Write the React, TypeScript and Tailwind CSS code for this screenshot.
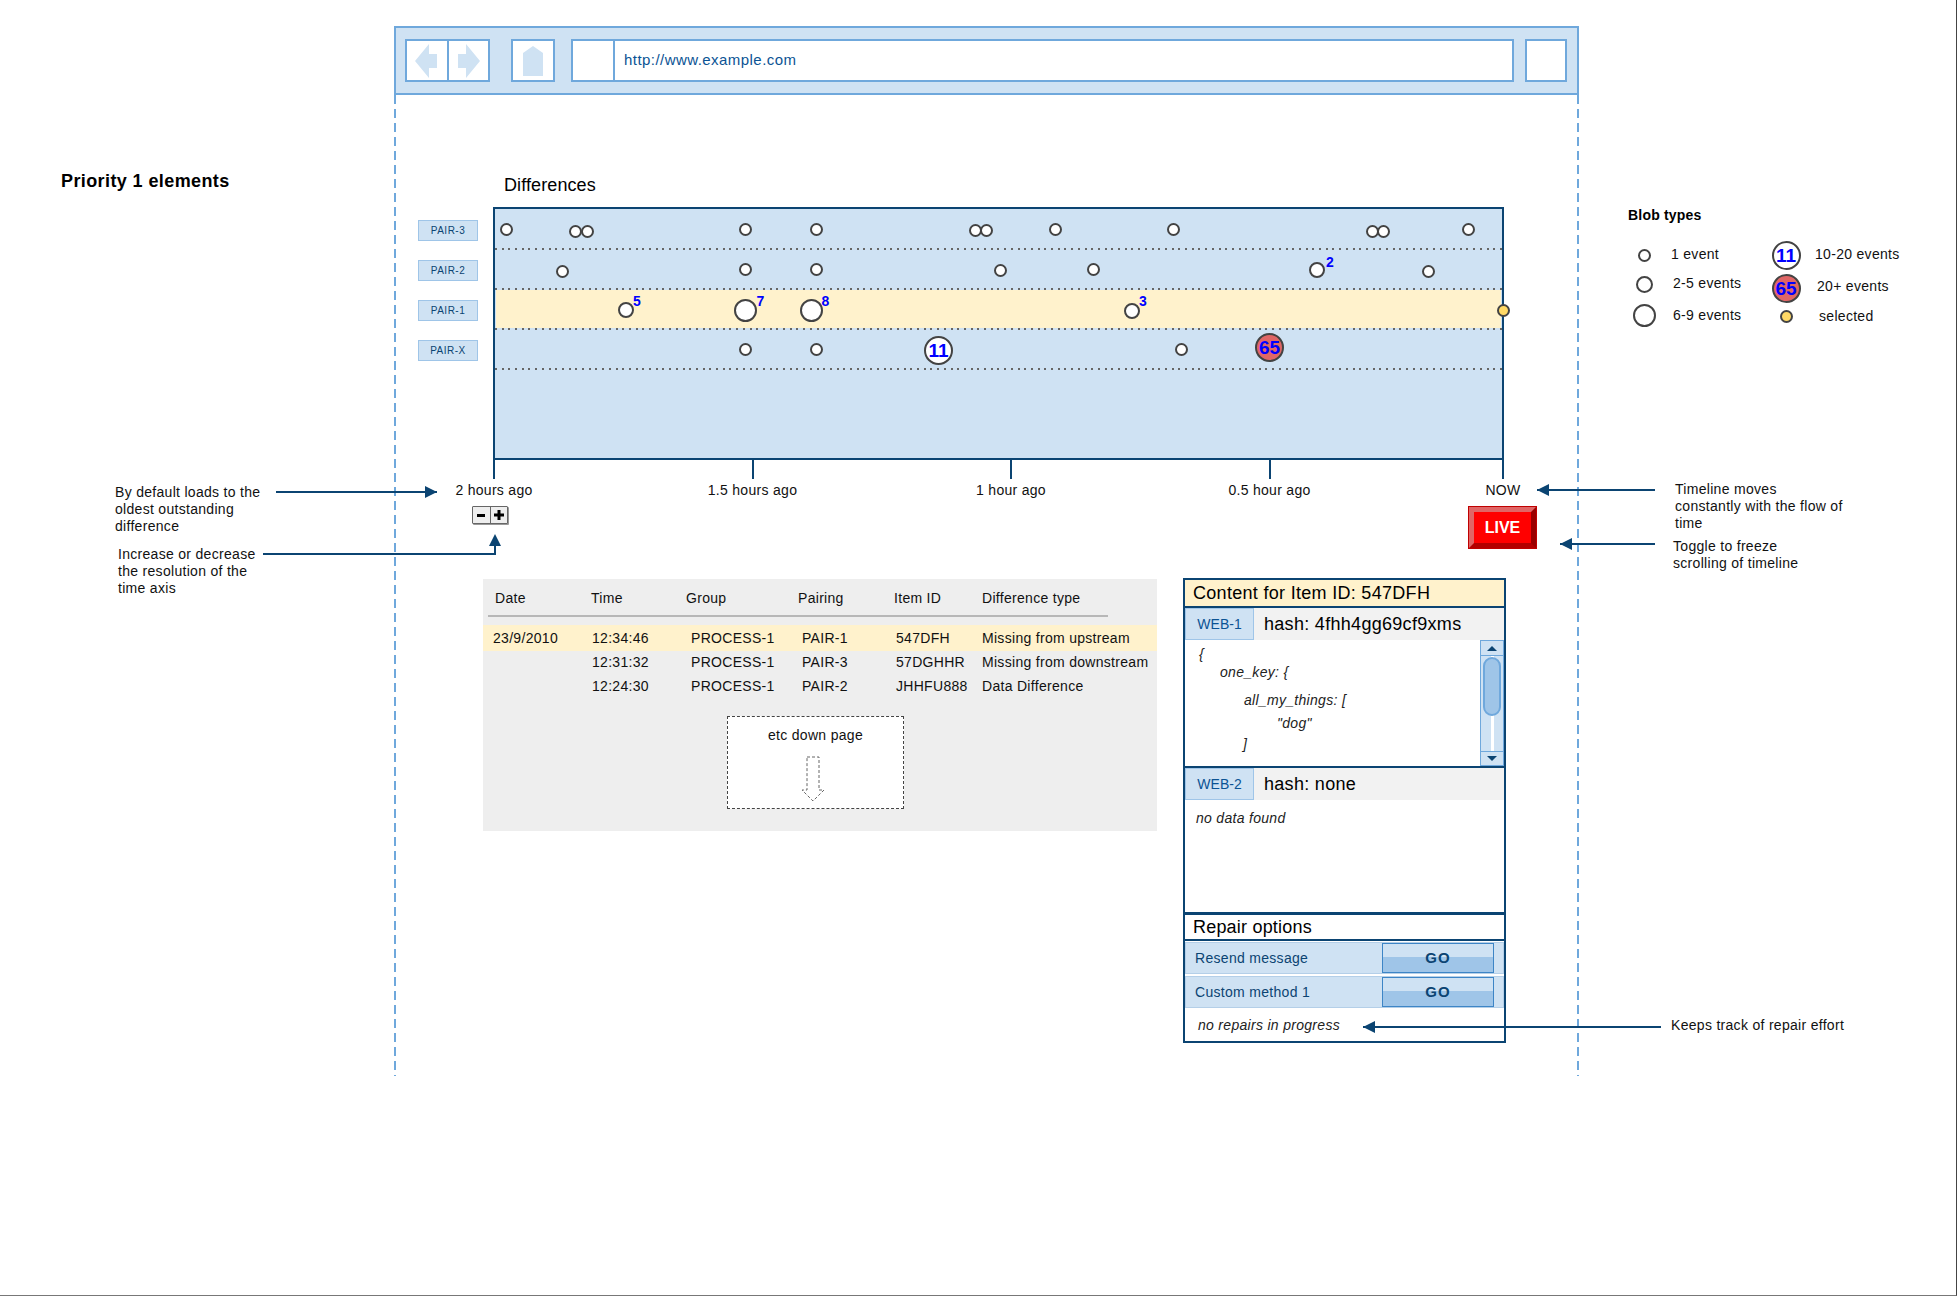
import React from 'react';

type Blob = { x: number; y: number; size: number; label?: string; labelX?: number; labelY?: number };

const CHART_LEFT = 495;
const CHART_TOP = 209;

const blobs: Blob[] = [
  { x: 506.5, y: 229.5, size: 13 },
  { x: 575.5, y: 231, size: 13 },
  { x: 587, y: 231, size: 13 },
  { x: 745.5, y: 229.5, size: 13 },
  { x: 816.5, y: 229, size: 13 },
  { x: 975.5, y: 230.5, size: 13 },
  { x: 986.5, y: 230.5, size: 13 },
  { x: 1055.5, y: 229, size: 13 },
  { x: 1173.5, y: 229.5, size: 13 },
  { x: 1372.5, y: 231, size: 13 },
  { x: 1383.5, y: 231, size: 13 },
  { x: 1468.5, y: 229.5, size: 13 },
  { x: 562, y: 271, size: 13 },
  { x: 745.5, y: 269.5, size: 13 },
  { x: 816.5, y: 269, size: 13 },
  { x: 1000, y: 270.5, size: 13 },
  { x: 1093.5, y: 269.5, size: 13 },
  { x: 1317, y: 270, size: 16, label: '2', labelX: 1329.5, labelY: 261.5 },
  { x: 1428.5, y: 271, size: 13 },
  { x: 625.5, y: 310, size: 16, label: '5', labelX: 636.5, labelY: 300.5 },
  { x: 745.5, y: 310, size: 23, label: '7', labelX: 760, labelY: 300.5 },
  { x: 811.5, y: 310, size: 23, label: '8', labelX: 825, labelY: 300.5 },
  { x: 1132, y: 310.5, size: 16, label: '3', labelX: 1142.5, labelY: 300.5 },
  { x: 745.5, y: 349.5, size: 13 },
  { x: 816.5, y: 349, size: 13 },
  { x: 1181.5, y: 349.5, size: 13 },
];

const rowLabels = ['PAIR-3', 'PAIR-2', 'PAIR-1', 'PAIR-X'];

const ticks = [
  { x: 0, label: '2 hours ago' },
  { x: 258.5, label: '1.5 hours ago' },
  { x: 517, label: '1 hour ago' },
  { x: 775.5, label: '0.5 hour ago' },
  { x: 1009, label: 'NOW' },
];

const diffRows = [
  { date: '23/9/2010', time: '12:34:46', pair: 'PAIR-1', id: '547DFH', type: 'Missing from upstream', on: true },
  { date: '', time: '12:31:32', pair: 'PAIR-3', id: '57DGHHR', type: 'Missing from downstream', on: false },
  { date: '', time: '12:24:30', pair: 'PAIR-2', id: 'JHHFU888', type: 'Data Difference', on: false },
];

const Circle = ({ size, className, children }: { size: number; className?: string; children?: React.ReactNode }) => (
  <div
    className={`flex items-center justify-center rounded-full border-2 border-[#434343] ${className ?? 'bg-white'}`}
    style={{ width: size, height: size }}
  >
    {children}
  </div>
);

const BlobEleven = () => (
  <Circle size={29}>
    <span className="text-[19px] font-bold text-[#0000ff] leading-none">11</span>
  </Circle>
);

const BlobHot = () => (
  <Circle size={29} className="bg-[#e06666]">
    <span className="text-[19px] font-bold text-[#0000ff] leading-none">65</span>
  </Circle>
);

// arrow head pointing left or right, the shaft is a plain bar
const ArrowLine = ({ x1, x2, y }: { x1: number; x2: number; y: number }) => {
  const left = Math.min(x1, x2);
  return (
    <div className="absolute h-[2px] bg-[#0b4472]" style={{ left, top: y - 1, width: Math.abs(x2 - x1) }}>
      <div
        className={`absolute top-[-5px] h-0 w-0 border-y-[6px] border-y-transparent ${
          x2 > x1 ? 'right-0 border-l-[12px] border-l-[#0b4472]' : 'left-0 border-r-[12px] border-r-[#0b4472]'
        }`}
      />
    </div>
  );
};

const Note = ({ x, y, lines }: { x: number; y: number; lines: string[] }) => (
  <div className="absolute text-[14px] leading-[17px] tracking-[0.3px] text-[#111] whitespace-nowrap" style={{ left: x, top: y }}>
    {lines.map((l) => (
      <div key={l}>{l}</div>
    ))}
  </div>
);

const LegendItem = ({ x, y, text }: { x: number; y: number; text: string }) => (
  <span className="absolute text-[14px] leading-[18px] tracking-[0.3px] text-[#111] whitespace-nowrap" style={{ left: x, top: y - 9 }}>
    {text}
  </span>
);

const LegendBlob = ({ x, y, size, children }: { x: number; y: number; size: number; children: React.ReactNode }) => (
  <div className="absolute" style={{ left: x - size / 2, top: y - size / 2 }}>
    {children}
  </div>
);

const SourceHeader = ({ name, hash }: { name: string; hash: string }) => (
  <div className="flex h-[32px] shrink-0 bg-[#f2f2f2]">
    <div className="flex w-[69px] items-center justify-center border border-[#9fc5e8] bg-[#cfe2f3] text-[14px] text-[#0b5394]">
      {name}
    </div>
    <div className="flex items-center pl-[10px] text-[18px] tracking-[0.3px] text-black">{hash}</div>
  </div>
);

const RepairRow = ({ text }: { text: string }) => (
  <div className="flex h-[32px] items-center justify-between border border-[#b4cfe8] bg-[#cfe2f3] pl-[9px] pr-[9px] text-[14px] tracking-[0.3px] text-[#0b4472]">
    <span>{text}</span>
    <div className="flex h-[30px] w-[112px] items-center justify-center border border-[#3d85c6] bg-[linear-gradient(to_bottom,#cfe2f3_0,#cfe2f3_48%,#9fc5e8_48%,#9fc5e8_100%)] text-[15px] font-bold tracking-[1px] text-[#0b4472]">
      GO
    </div>
  </div>
);

export default function App() {
  return (
    <div className="relative h-[1296px] w-full overflow-hidden border-b border-r border-b-[#777] border-r-[#444] bg-white font-['Liberation_Sans',Arial,sans-serif]">
      {/* browser mock */}
      <div className="ml-[394px] w-[1185px] pt-[26px]">
        <div className="flex h-[69px] items-center border-2 border-[#6fa8dc] bg-[#cfe2f3] pl-[9px] pr-[10px]">
          <div className="flex h-[43px] w-[85px] border-2 border-[#6fa8dc] bg-white">
            <div className="flex flex-1 items-center justify-center border-r-2 border-[#6fa8dc]">
              <svg width="26" height="36" viewBox="0 0 26 36">
                <path d="M1 18 L15 1 L15 11 L23 11 L23 25 L15 25 L15 35 Z" fill="#cfe2f3" />
              </svg>
            </div>
            <div className="flex flex-1 items-center justify-center">
              <svg width="26" height="36" viewBox="0 0 26 36">
                <path d="M25 18 L11 1 L11 11 L3 11 L3 25 L11 25 L11 35 Z" fill="#cfe2f3" />
              </svg>
            </div>
          </div>
          <div className="ml-[21px] flex h-[43px] w-[44px] items-center justify-center border-2 border-[#6fa8dc] bg-white">
            <svg width="22" height="32" viewBox="0 0 22 32">
              <path d="M1 8 L11 1 L21 8 L21 31 L1 31 Z" fill="#cfe2f3" />
            </svg>
          </div>
          <div className="ml-[16px] flex h-[43px] w-[943px] border-2 border-[#6fa8dc] bg-white">
            <div className="w-[42px] border-r-2 border-[#6fa8dc]" />
            <div className="flex items-center pl-[9px] text-[15px] tracking-[0.45px] text-[#0b5394]">http://www.example.com</div>
          </div>
          <div className="ml-[11px] h-[43px] w-[42px] border-2 border-[#6fa8dc] bg-white" />
        </div>
      </div>

      {/* page body between the dashed edges */}
      <div className="relative ml-[394px] h-[981px] w-[1185px] bg-[repeating-linear-gradient(to_bottom,#6fa8dc_0,#6fa8dc_9px,transparent_9px,transparent_14px)] bg-[length:2px_100%] bg-no-repeat">
        <div className="absolute inset-y-0 right-0 w-[2px] bg-[repeating-linear-gradient(to_bottom,#6fa8dc_0,#6fa8dc_9px,transparent_9px,transparent_14px)]" />

        <h2 className="pl-[110px] pt-[79px] text-[18px] leading-[22px] tracking-[0.1px] text-black">Differences</h2>

        <div className="mt-[11px] flex pl-[24px]">
          <div className="flex w-[60px] flex-col pt-[13px]">
            {rowLabels.map((l) => (
              <div key={l} className="mb-[19px] flex h-[21px] items-center justify-center border border-[#9fc5e8] bg-[#cfe2f3] text-[10px] tracking-[0.5px] text-[#0b4472]">
                {l}
              </div>
            ))}
          </div>

          {/* timeline */}
          <div className="relative ml-[15px] h-[253px] w-[1011px] border-2 border-[#0b4472] bg-[#cfe2f3]">
            <div className="flex flex-col pt-[1px]">
              {[0, 1, 2, 3].map((i) => (
                <div key={i} className="flex h-[40px] flex-col">
                  <div className={`mx-[1px] flex-1 ${i === 2 ? 'bg-[#fff2cc]' : ''}`} />
                  <div className="h-[2px] bg-[repeating-linear-gradient(to_right,#666_0,#666_2px,transparent_2px,transparent_6.7px)]" />
                </div>
              ))}
            </div>
            {blobs.map((b) => (
              <React.Fragment key={`${b.x}-${b.y}`}>
                <div className="absolute" style={{ left: b.x - CHART_LEFT - b.size / 2, top: b.y - CHART_TOP - b.size / 2 }}>
                  <Circle size={b.size} />
                </div>
                {b.label && (
                  <span
                    className="absolute text-[14px] leading-none font-bold text-[#0000ff]"
                    style={{ left: (b.labelX ?? 0) - CHART_LEFT - 3.5, top: (b.labelY ?? 0) - CHART_TOP - 7 }}
                  >
                    {b.label}
                  </span>
                )}
              </React.Fragment>
            ))}
            <div className="absolute left-[429px] top-[127px]"><BlobEleven /></div>
            <div className="absolute left-[760px] top-[124px]"><BlobHot /></div>
            <div className="absolute right-[-8px] top-[95px]"><Circle size={13} className="bg-[#ffd966]" /></div>
          </div>
        </div>

        {/* axis */}
        <div className="relative ml-[99px] h-[75px] w-[1011px]">
          {ticks.map((t) => (
            <div key={t.label} className="absolute top-0 flex w-[120px] flex-col items-center" style={{ left: t.x - 60 + 1 }}>
              <div className="h-[19px] w-[2px] bg-[#0b4472]" />
              <span className="mt-[2px] text-[14px] leading-[18px] tracking-[0.3px] text-[#111]">{t.label}</span>
            </div>
          ))}
          <div className="absolute left-[-21px] top-[46px] flex h-[18px] w-[36px] rounded-[1px] border border-[#666] bg-[#eeeeee] shadow-[1px_1px_0_#999]">
            <span className="flex flex-1 items-center justify-center border-r border-[#666]">
              <span className="h-[3px] w-[8px] bg-black" />
            </span>
            <span className="flex flex-1 items-center justify-center">
              <svg width="12" height="12" viewBox="0 0 12 12">
                <path d="M4.5 1 H7.5 V4.5 H11 V7.5 H7.5 V11 H4.5 V7.5 H1 V4.5 H4.5 Z" fill="#000" />
              </svg>
            </span>
          </div>
          <div className="absolute left-[976px] top-[47px] flex h-[41px] w-[67px] items-center justify-center border-[5px] border-t-[#e06666] border-l-[#e06666] border-r-[#990000] border-b-[#b30000] bg-[#ff0000] text-[16px] font-bold text-white shadow-[0_0_0_1px_#c00000]">
            LIVE
          </div>
        </div>

        {/* lower row */}
        <div className="mt-[44px] flex items-start pl-[89px]">
          <div className="h-[252px] w-[674px] bg-[#eeeeee] text-[14px] tracking-[0.3px] text-[#111]">
            <div className="ml-[5px] grid h-[38px] w-[620px] grid-cols-[96px_95px_112px_96px_88px_1fr] items-center border-b-2 border-[#b7b7b7] pl-[7px] pt-[2px]">
              <span>Date</span>
              <span>Time</span>
              <span>Group</span>
              <span>Pairing</span>
              <span>Item ID</span>
              <span>Difference type</span>
            </div>
            <div className="mt-[8px] flex flex-col">
              {diffRows.map((r) => (
                <div key={r.time} className={`grid grid-cols-[99px_99px_111px_94px_86px_1fr] items-center pl-[10px] ${r.on ? 'mb-[-1px] h-[26px] bg-[#fff2cc]' : 'h-[24px]'}`}>
                  <span>{r.date}</span>
                  <span>{r.time}</span>
                  <span>PROCESS-1</span>
                  <span>{r.pair}</span>
                  <span>{r.id}</span>
                  <span className="whitespace-nowrap">{r.type}</span>
                </div>
              ))}
            </div>
            <div className="ml-[244px] mt-[18px] flex h-[93px] w-[177px] flex-col items-center border border-dashed border-[#444] bg-white pt-[9px]">
              <span className="leading-[18px]">etc down page</span>
              <svg className="mr-[6px] mt-[12px]" width="24" height="46" viewBox="0 0 24 46" fill="none" stroke="#666" strokeDasharray="3 2">
                <path d="M6 1 L18 1 L18 34 L23 34 L12 45 L1 34 L6 34 Z" />
              </svg>
            </div>
          </div>

          <div className="ml-[26px] mt-[-1px] flex h-[465px] w-[323px] flex-col border-2 border-[#0b4472] bg-white">
            <div className="flex h-[28px] shrink-0 items-center border-b-2 border-[#0b4472] bg-[#fff2cc] pl-[8px] text-[18px] tracking-[0.3px] text-black">
              Content for Item ID: 547DFH
            </div>
            <SourceHeader name="WEB-1" hash="hash: 4fhh4gg69cf9xms" />
            <div className="relative flex h-[128px] shrink-0 border-b-2 border-[#0b4472]">
              <div className="relative flex-1 text-[14px] tracking-[0.3px] italic text-[#222]">
                <span className="absolute left-[14px] top-[4px]">{'{'}</span>
                <span className="absolute left-[35px] top-[22px]">one_key: {'{'}</span>
                <span className="absolute left-[59px] top-[50px]">all_my_things: [</span>
                <span className="absolute left-[92px] top-[73px]">"dog"</span>
                <span className="absolute left-[58px] top-[94px]">]</span>
              </div>
              <div className="flex w-[24px] flex-col border border-[#6fa8dc] bg-[#cfe2f3]">
                <div className="flex h-[15px] items-center justify-center border-b border-[#6fa8dc]">
                  <div className="h-0 w-0 border-x-[5px] border-b-[5px] border-x-transparent border-b-[#0b4472]" />
                </div>
                <div className="relative flex-1 px-[2px] pt-[1px]">
                  <div className="absolute inset-y-0 left-[10px] w-[3px] bg-white" />
                  <div className="relative h-[59px] rounded-[9px] border-2 border-[#6fa8dc] bg-[#9fc5e8]" />
                </div>
                <div className="flex h-[14px] items-center justify-center border-t border-[#6fa8dc]">
                  <div className="h-0 w-0 border-x-[5px] border-t-[5px] border-x-transparent border-t-[#0b4472]" />
                </div>
              </div>
            </div>
            <SourceHeader name="WEB-2" hash="hash: none" />
            <div className="h-[115px] shrink-0 border-b-[3px] border-[#0b4472] pl-[11px] pt-[8px] text-[14px] tracking-[0.3px] italic text-[#222]">no data found</div>
            <div className="flex h-[26px] shrink-0 items-center border-b-2 border-[#0b4472] pl-[8px] text-[18px] tracking-[0.2px] text-black">Repair options</div>
            <div className="flex flex-col gap-[2px] pt-[1px]">
              <RepairRow text="Resend message" />
              <RepairRow text="Custom method 1" />
            </div>
            <div className="pl-[13px] pt-[7px] text-[14px] tracking-[0.3px] italic text-[#222]">no repairs in progress</div>
          </div>
        </div>
      </div>

      {/* diagram notes round the wireframe */}
      <div className="absolute left-[61px] top-[170px] text-[18px] font-bold leading-[22px] tracking-[0.4px] text-black">Priority 1 elements</div>

      <Note x={115} y={484} lines={['By default loads to the', 'oldest outstanding', 'difference']} />
      <ArrowLine x1={276} x2={437} y={492} />
      <Note x={118} y={546} lines={['Increase or decrease', 'the resolution of the', 'time axis']} />
      <div className="absolute left-[263px] top-[553px] h-[2px] w-[233px] bg-[#0b4472]" />
      <div className="absolute left-[494px] top-[540px] h-[15px] w-[2px] bg-[#0b4472]" />
      <div className="absolute left-[489px] top-[534px] h-0 w-0 border-x-[6px] border-b-[12px] border-x-transparent border-b-[#0b4472]" />

      <ArrowLine x1={1655} x2={1537} y={490} />
      <Note x={1675} y={481} lines={['Timeline moves', 'constantly with the flow of', 'time']} />
      <ArrowLine x1={1655} x2={1560} y={544} />
      <Note x={1673} y={538} lines={['Toggle to freeze', 'scrolling of timeline']} />
      <ArrowLine x1={1661} x2={1363} y={1027} />
      <Note x={1671} y={1017} lines={['Keeps track of repair effort']} />

      {/* legend */}
      <div className="absolute left-[1628px] top-[206px] text-[14px] font-bold leading-[18px] tracking-[0.2px] text-black">Blob types</div>
      <LegendBlob x={1644} y={255} size={13}><Circle size={13} /></LegendBlob>
      <LegendItem x={1671} y={254} text="1 event" />
      <LegendBlob x={1644} y={284} size={17}><Circle size={17} /></LegendBlob>
      <LegendItem x={1673} y={283} text="2-5 events" />
      <LegendBlob x={1644} y={315} size={23}><Circle size={23} /></LegendBlob>
      <LegendItem x={1673} y={315} text="6-9 events" />
      <LegendBlob x={1786} y={255} size={29}><BlobEleven /></LegendBlob>
      <LegendItem x={1815} y={254} text="10-20 events" />
      <LegendBlob x={1786} y={288} size={29}><BlobHot /></LegendBlob>
      <LegendItem x={1817} y={286} text="20+ events" />
      <LegendBlob x={1786} y={316} size={13}><Circle size={13} className="bg-[#ffd966]" /></LegendBlob>
      <LegendItem x={1819} y={316} text="selected" />
    </div>
  );
}
